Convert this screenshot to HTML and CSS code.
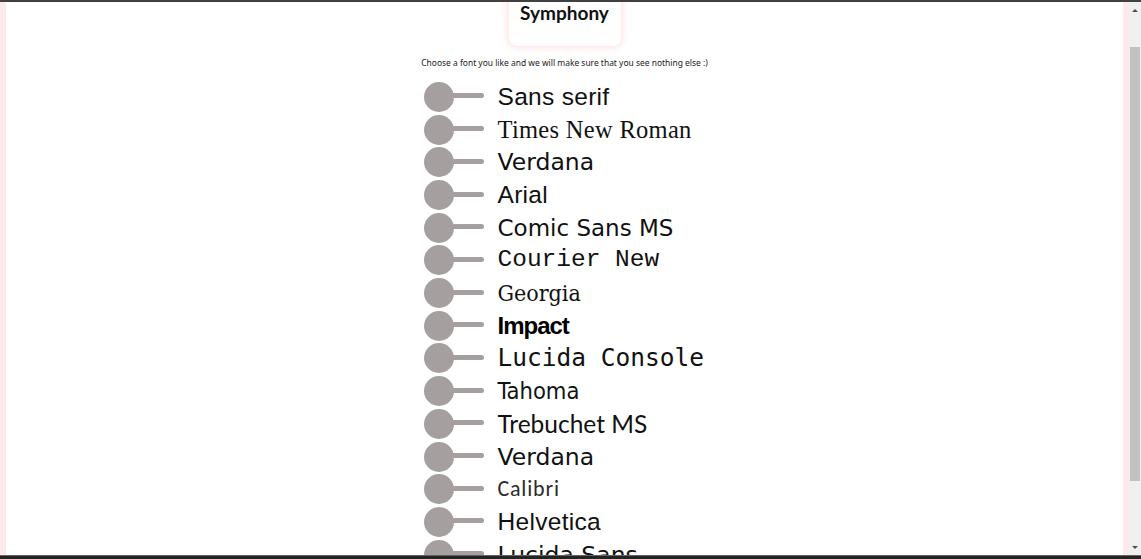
FILE: index.html
```html
<!DOCTYPE html>
<html lang="en">
<head>
<meta charset="utf-8">
<title>Symphony</title>
<link rel="stylesheet" href="styles.css">
</head>
<body>
<div class="frame">
  <div class="topbar"></div>
  <div class="viewport">
    <div class="gutter"></div>
    <main class="page">
      <header class="card"><h1 class="title">Symphony</h1></header>
      <section class="picker">
        <p class="hint">Choose a font you like and we will make sure that you see nothing else :)</p>
        <ul class="fonts">
          <li class="row"><span class="knob"><span class="dot"></span><span class="stem"></span></span><span class="label f-sans">Sans serif</span></li>
          <li class="row"><span class="knob"><span class="dot"></span><span class="stem"></span></span><span class="label f-times">Times New Roman</span></li>
          <li class="row"><span class="knob"><span class="dot"></span><span class="stem"></span></span><span class="label f-verdana">Verdana</span></li>
          <li class="row"><span class="knob"><span class="dot"></span><span class="stem"></span></span><span class="label f-arial">Arial</span></li>
          <li class="row"><span class="knob"><span class="dot"></span><span class="stem"></span></span><span class="label f-comic">Comic Sans MS</span></li>
          <li class="row"><span class="knob"><span class="dot"></span><span class="stem"></span></span><span class="label f-courier">Courier New</span></li>
          <li class="row"><span class="knob"><span class="dot"></span><span class="stem"></span></span><span class="label f-georgia">Georgia</span></li>
          <li class="row"><span class="knob"><span class="dot"></span><span class="stem"></span></span><span class="label f-impact">Impact</span></li>
          <li class="row"><span class="knob"><span class="dot"></span><span class="stem"></span></span><span class="label f-lucida">Lucida Console</span></li>
          <li class="row"><span class="knob"><span class="dot"></span><span class="stem"></span></span><span class="label f-tahoma">Tahoma</span></li>
          <li class="row"><span class="knob"><span class="dot"></span><span class="stem"></span></span><span class="label f-trebuchet">Trebuchet MS</span></li>
          <li class="row"><span class="knob"><span class="dot"></span><span class="stem"></span></span><span class="label f-verdana">Verdana</span></li>
          <li class="row"><span class="knob"><span class="dot"></span><span class="stem"></span></span><span class="label f-calibri">Calibri</span></li>
          <li class="row"><span class="knob"><span class="dot"></span><span class="stem"></span></span><span class="label f-helvetica">Helvetica</span></li>
          <li class="row"><span class="knob"><span class="dot"></span><span class="stem"></span></span><span class="label f-lucidasans">Lucida Sans</span></li>
        </ul>
      </section>
    </main>
    <div class="gutter"></div>
    <div class="scrollbar">
      <div class="arrow-box"><span class="arrow-up"></span></div>
      <div class="track"><div class="thumb"></div></div>
      <div class="arrow-box"><span class="arrow-down"></span></div>
    </div>
  </div>
  <div class="bottombar"></div>
</div>
</body>
</html>
```
FILE: styles.css
```css
html, body {
  margin: 0;
  padding: 0;
  height: 100%;
  overflow: hidden;
  background: #ffffff;
}

.frame {
  display: flex;
  flex-direction: column;
  height: 559px;
}

.topbar {
  flex: none;
  height: 2px;
  background: #404040;
}

.bottombar {
  flex: none;
  height: 3px;
  border-top: 1px solid #626262;
  background: #232323;
}

.viewport {
  flex: 1;
  min-height: 0;
  display: flex;
}

.gutter {
  flex: none;
  width: 6px;
  background: #fde8eb;
}

.page {
  flex: 1;
  min-width: 0;
  overflow: hidden;
  background: #ffffff;
  display: flex;
  flex-direction: column;
  align-items: center;
}

.card {
  flex: none;
  box-sizing: border-box;
  width: 112px;
  height: 52px;
  margin-top: -8px;
  padding-top: 9px;
  background: #ffffff;
  border-radius: 8px;
  box-shadow: 0 0 6px 2px rgba(255, 196, 196, 0.45);
  text-align: center;
}

.title {
  margin: 0;
  font-family: Lato, "Noto Sans", sans-serif;
  font-weight: 700;
  font-size: 19px;
  line-height: 20px;
  color: #111111;
}

.picker {
  flex: none;
  width: 286px;
  margin-top: 11px;
}

.hint {
  margin: 0 -20px;
  text-align: center;
  white-space: nowrap;
  font-family: "Noto Sans", "Open Sans", sans-serif;
  font-size: 8.45px;
  line-height: 12px;
  color: #1a1a1a;
}

.fonts {
  list-style: none;
  margin: 11.65px 0 0 0;
  padding: 0 0 0 2px;
}

.row {
  display: flex;
  align-items: center;
  height: 32.7px;
}

.knob {
  flex: none;
  display: flex;
  align-items: center;
  width: 60px;
}

.dot {
  flex: none;
  width: 30px;
  height: 30px;
  border-radius: 50%;
  background: #a69f9f;
}

.stem {
  flex: none;
  width: 32px;
  height: 5px;
  margin-left: -2px;
  margin-top: -2px;
  border-radius: 3px;
  background: #a69f9f;
}

.label {
  margin-left: 14px;
  font-size: 24.5px;
  line-height: 30px;
  color: #111111;
  white-space: nowrap;
}

.f-sans { font-family: "Liberation Sans", Arial, sans-serif; letter-spacing: 0.3px; }
.f-times { font-family: "Times New Roman", "Liberation Serif", serif; letter-spacing: 0.3px; }
.f-verdana { font-family: Verdana, "DejaVu Sans", sans-serif; font-size: 23.5px; }
.f-arial { font-family: Arial, "Liberation Sans", sans-serif; letter-spacing: 0.3px; }
.f-comic { font-family: "Comic Sans MS", "DejaVu Sans", sans-serif; font-size: 23px; }
.f-courier { font-family: "Courier New", "Liberation Mono", monospace; }
.f-georgia { font-family: Georgia, "DejaVu Serif Condensed", "DejaVu Serif", serif; font-size: 23px; }
.f-impact { font-family: Impact, "Liberation Sans", sans-serif; font-weight: 700; font-size: 24px; letter-spacing: -1px; color: #000000; }
.f-lucida { font-family: "Lucida Console", "DejaVu Sans Mono", monospace; }
.f-tahoma { font-family: Tahoma, "DejaVu Sans Condensed", sans-serif; font-size: 23.5px; }
.f-trebuchet { font-family: "Trebuchet MS", Lato, sans-serif; }
.f-calibri { font-family: Calibri, Carlito, Lato, sans-serif; font-weight: 300; font-size: 22px; letter-spacing: 0.8px; color: #2b2b2b; }
.f-helvetica { font-family: Helvetica, "Liberation Sans", sans-serif; letter-spacing: 0.3px; }
.f-lucidasans { font-family: "Lucida Sans", "DejaVu Sans", sans-serif; font-size: 23.5px; }

.scrollbar {
  flex: none;
  width: 12px;
  display: flex;
  flex-direction: column;
  background: #f0f0f0;
}

.arrow-box {
  flex: none;
  height: 16px;
  display: flex;
  align-items: center;
  justify-content: center;
}

.arrow-up {
  width: 0;
  height: 0;
  border-left: 3px solid transparent;
  border-right: 3px solid transparent;
  border-bottom: 3px solid #505050;
}

.arrow-down {
  width: 0;
  height: 0;
  border-left: 3px solid transparent;
  border-right: 3px solid transparent;
  border-top: 3px solid #505050;
}

.track {
  flex: 1;
  display: flex;
  justify-content: center;
}

.thumb {
  width: 10px;
  height: 434px;
  margin-top: 29px;
  background: #c1c1c1;
}
```
